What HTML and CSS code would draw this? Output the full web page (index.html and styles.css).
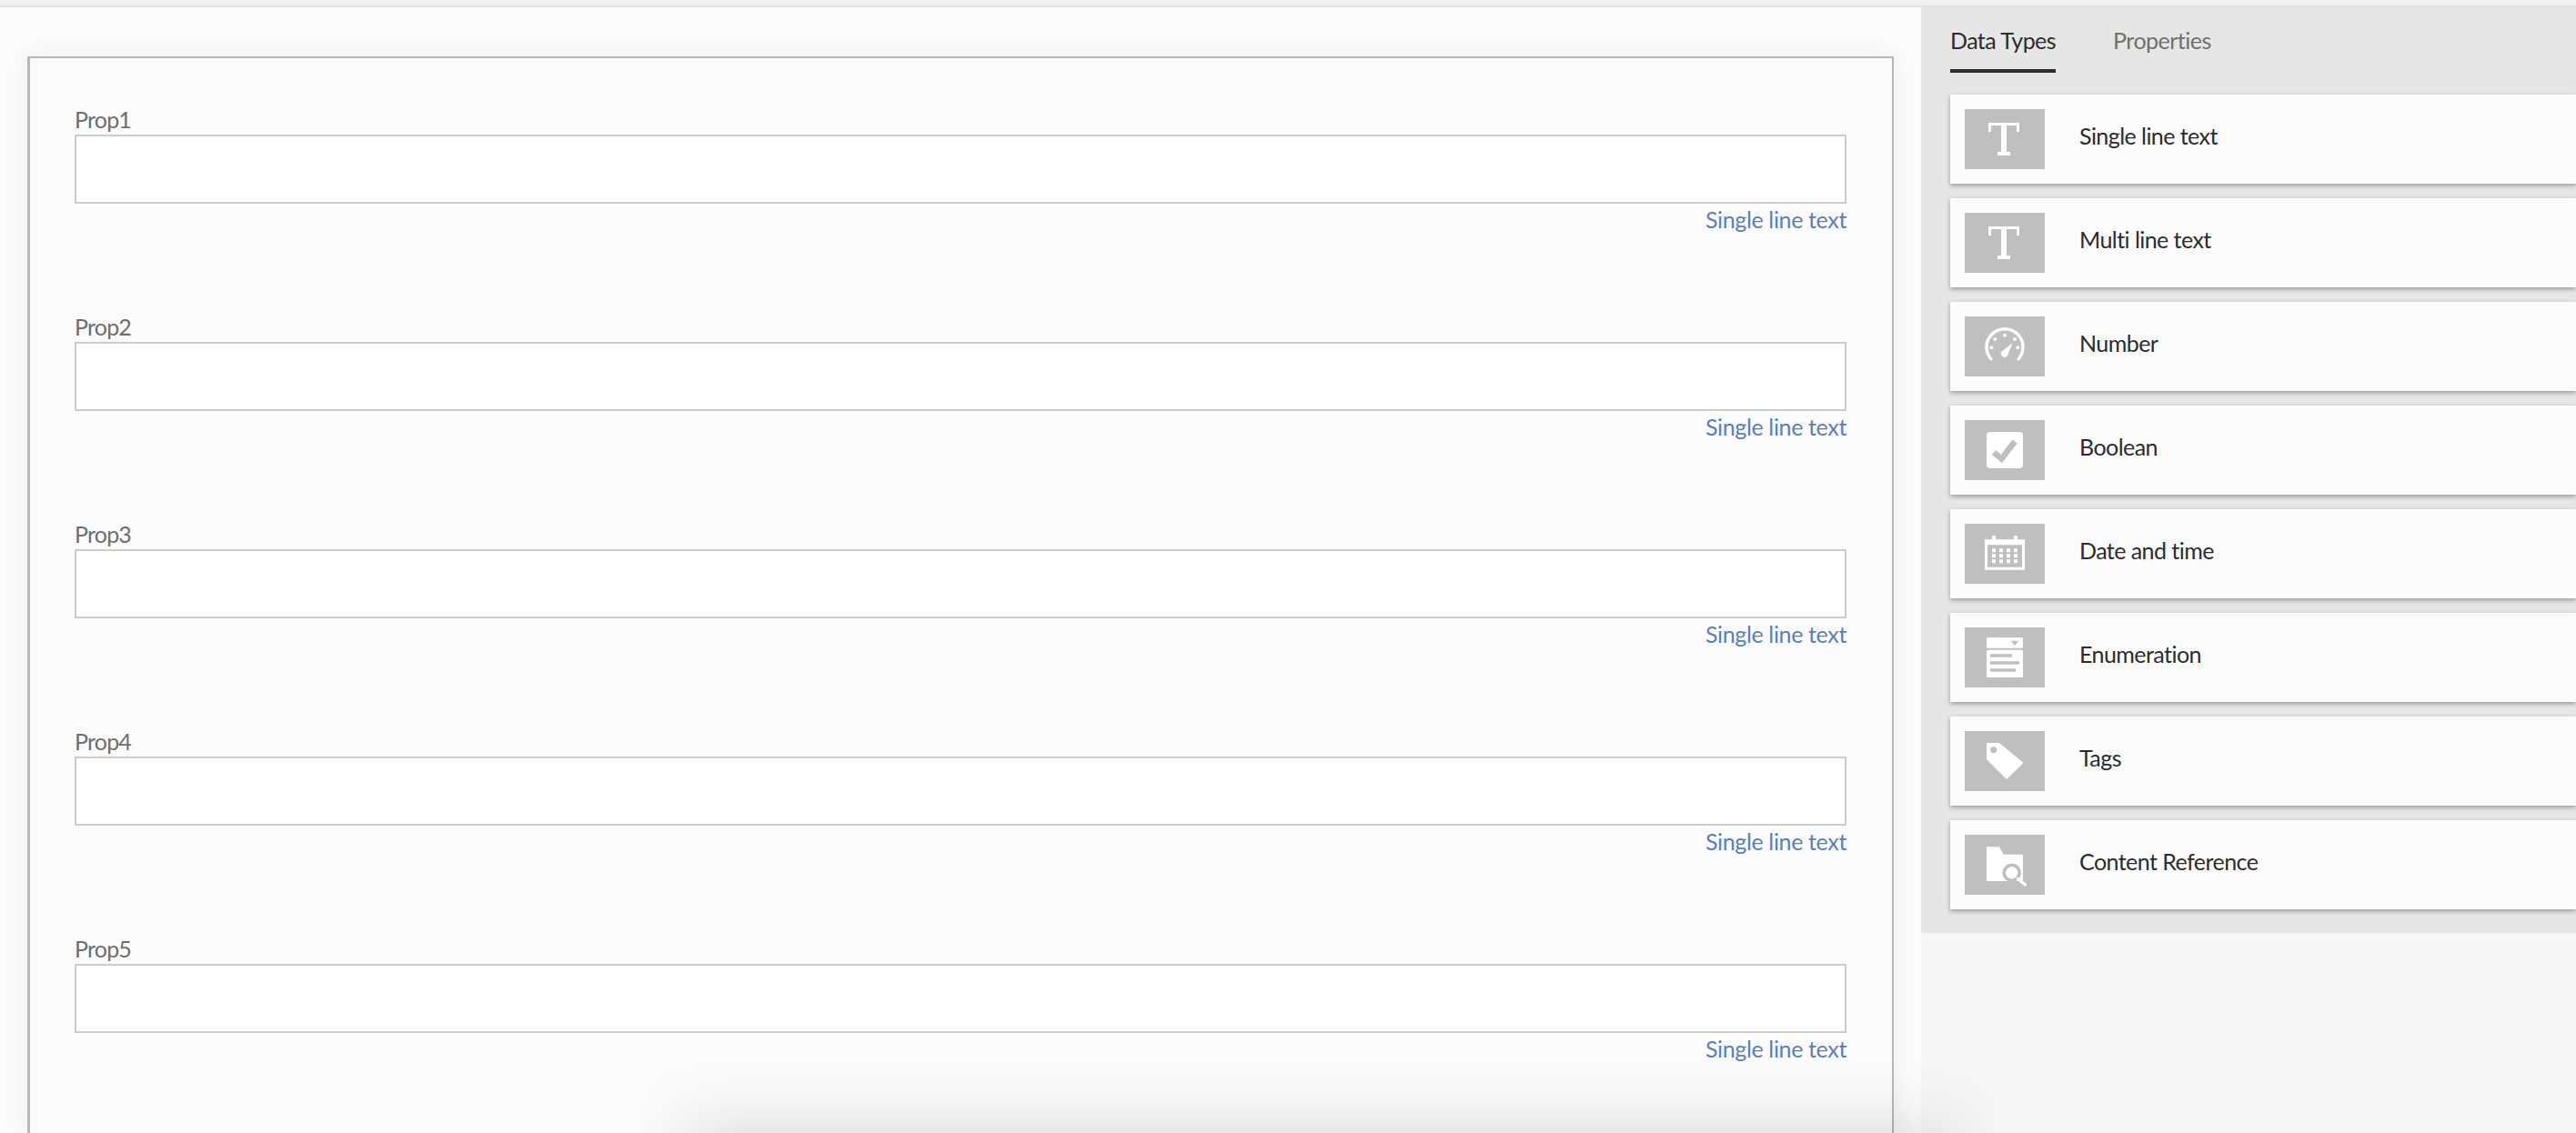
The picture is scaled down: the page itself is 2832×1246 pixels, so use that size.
FILE: index.html
```html
<!DOCTYPE html>
<html lang="en">
<head>
<meta charset="utf-8">
<title>Model editor</title>
<link rel="stylesheet" href="styles.css">
</head>
<body>
<div class="topbar"></div>
<div class="workspace">
  <main class="canvas">
    <section class="form-card">
      <div class="field"><label class="field-label">Prop1</label><div class="field-input"></div><div class="field-type">Single line text</div></div>
      <div class="field"><label class="field-label">Prop2</label><div class="field-input"></div><div class="field-type">Single line text</div></div>
      <div class="field"><label class="field-label">Prop3</label><div class="field-input"></div><div class="field-type">Single line text</div></div>
      <div class="field"><label class="field-label">Prop4</label><div class="field-input"></div><div class="field-type">Single line text</div></div>
      <div class="field"><label class="field-label">Prop5</label><div class="field-input"></div><div class="field-type">Single line text</div></div>
    </section>
  </main>
  <aside class="sidebar">
    <div class="panel">
      <nav class="tabs">
        <span class="tab tab-active">Data Types</span>
        <span class="tab">Properties</span>
      </nav>
      <ul class="types">
        <li class="type"><span class="tile"><svg class="icon" viewBox="0 0 40 40"><path d="M2 2H36V12H33V5H22V34H26V38H12V34H16V5H5V12H2Z" fill="#fff"/></svg></span><span class="type-name">Single line text</span></li>
        <li class="type"><span class="tile"><svg class="icon" viewBox="0 0 40 40"><path d="M2 2H36V12H33V5H22V34H26V38H12V34H16V5H5V12H2Z" fill="#fff"/></svg></span><span class="type-name">Multi line text</span></li>
        <li class="type"><span class="tile"><svg class="icon" viewBox="0 0 40 40"><path d="M5 34A20 20 0 1 1 35 34" fill="none" stroke="#fff" stroke-width="3.400" stroke-linecap="round"/><path d="M28.700 16.300L23 30a3.800 3.800 0 1 1-6.500-4.500z" fill="#fff"/><circle cx="5.300" cy="21.300" r="2" fill="#fff"/><circle cx="9.300" cy="12" r="2" fill="#fff"/><circle cx="20" cy="7.700" r="2" fill="#fff"/><circle cx="31" cy="12" r="2" fill="#fff"/><circle cx="34.300" cy="21.300" r="2" fill="#fff"/></svg></span><span class="type-name">Number</span></li>
        <li class="type"><span class="tile"><svg class="icon" viewBox="0 0 40 40"><rect width="40" height="40" rx="4" fill="#fff"/><path d="M8 22.500L16.500 29.500L31 10.500" fill="none" stroke="#bfbfbf" stroke-width="6.500"/></svg></span><span class="type-name">Boolean</span></li>
        <li class="type"><span class="tile"><svg class="icon" viewBox="0 0 40 40"><path fill="#fff" fill-rule="evenodd" d="M6 0.300H10V4.300H30V0.300H34V4.300H42V37.700H-2V4.300H6ZM1 10.300V34.700H39V10.300Z"/><path fill="#fff" d="M6 14.300h4v4h-4zM14 14.300h4v4h-4zM22 14.300h4v4h-4zM30 14.300h4v4h-4zM6 20.300h4v4h-4zM14 20.300h4v4h-4zM22 20.300h4v4h-4zM30 20.300h4v4h-4zM6 26.300h4v4h-4zM14 26.300h4v4h-4zM22 26.300h4v4h-4zM30 26.300h4v4h-4z"/></svg></span><span class="type-name">Date and time</span></li>
        <li class="type"><span class="tile"><svg class="icon" viewBox="0 0 40 40"><rect y="-2" width="40" height="11.700" rx="1.500" fill="#fff"/><path d="M26.700 1.700H35.300L31 7z" fill="#bfbfbf"/><rect y="11.700" width="40" height="30.300" rx="1.500" fill="#fff"/><path d="M4 16.300H28V19.700H4zM4 24.300H36V27.700H4zM4 32.300H32V35.700H4z" fill="#bfbfbf"/></svg></span><span class="type-name">Enumeration</span></li>
        <li class="type"><span class="tile"><svg class="icon" viewBox="0 0 40 40"><path d="M1 0H14L39.500 21Q40.500 22 39.500 23L23 39Q22 40 21 39L1 19Q0 18 0 17V1Q0 0 1 0Z" fill="#fff"/><circle cx="7.700" cy="7.700" r="3.500" fill="#bfbfbf"/></svg></span><span class="type-name">Tags</span></li>
        <li class="type"><span class="tile"><svg class="icon" viewBox="0 0 40 40"><path d="M0 1Q0 .300 1 .300H14L18.700 8.700H39Q40 8.700 40 9.700V37Q40 38 39 38H1Q0 38 0 37Z" fill="#fff"/><circle cx="27.700" cy="28.700" r="8.500" fill="#fff" stroke="#bfbfbf" stroke-width="3.600"/><path d="M34.500 35.500L42.500 42" stroke="#fff" stroke-width="3.400" stroke-linecap="round"/></svg></span><span class="type-name">Content Reference</span></li>
      </ul>
    </div>
  </aside>
</div>
<div class="overlay-shadow"></div>
</body>
</html>
```
FILE: styles.css
```css
* { box-sizing: border-box; }
body {
  margin: 0;
  height: 1246px;
  overflow: hidden;
  position: relative;
  background: #fbfbfb;
  font-family: Lato, "Liberation Sans", sans-serif;
}
.topbar { height: 8px; background: #f0f0f0; border-bottom: 2px solid #e1e1e1; }
.workspace { display: grid; grid-template-columns: 2112px 720px; height: 1238px; }
.canvas { padding: 54px 30px 0; overflow: hidden; height: 1238px; }
.form-card {
  height: 1184px;
  width: 2052px;
  border: 2px solid #b8b8b8;
  border-left-width: 3px;
  border-bottom: 0;
  background: #fbfbfb;
  box-shadow: 0 0 24px rgba(0,0,0,.05);
  padding: 48px 50px 0 49px;
  display: flex;
  flex-direction: column;
  gap: 82px;
}
.field { display: flex; flex-direction: column; flex: none; height: 146px; }
.field-label { font-size: 25px; line-height: 39px; height: 36px; color: #6e6e6e; letter-spacing: -0.8px; }
.field-input { height: 76px; flex: none; background: #fff; border: 2px solid #ccc; }
.field-type { margin-top: 1px; text-align: right; font-size: 25px; line-height: 32px; color: #5a7fbd; letter-spacing: -0.35px; }
.sidebar { background: #f6f6f6; height: 1238px; }
.panel { background: #e6e6e6; height: 1018px; padding: 0 0 0 32px; }
.tabs { display: flex; gap: 63px; height: 96px; }
.tab { height: 72px; font-size: 25px; line-height: 72px; color: #707070; letter-spacing: -0.5px; }
.tab-active { color: #2c2c2c; border-bottom: 4px solid #2c2c2c; letter-spacing: -0.55px; }
.types { list-style: none; margin: 0; padding: 0; display: flex; flex-direction: column; gap: 16px; }
.type {
  height: 98px;
  background: #fbfbfb;
  box-shadow: 0 2px 5px rgba(0,0,0,.35);
  display: flex;
  align-items: center;
  padding-left: 16px;
}
.tile { width: 88px; height: 66px; background: #bfbfbf; display: flex; align-items: center; justify-content: center; flex: none; }
.icon { width: 40px; height: 40px; overflow: visible; }
.type-name { margin-left: 38px; margin-top: -8px; font-size: 25px; line-height: 34px; color: #2c2c2c; letter-spacing: -0.55px; }
.overlay-shadow {
  position: absolute;
  left: 700px;
  bottom: 0;
  width: 1500px;
  height: 80px;
  background: linear-gradient(to bottom, rgba(0,0,0,0), rgba(0,0,0,.012) 35%, rgba(0,0,0,.035) 65%, rgba(0,0,0,.08));
  -webkit-mask-image: linear-gradient(to right, transparent, #000 120px, #000 calc(100% - 120px), transparent);
  mask-image: linear-gradient(to right, transparent, #000 120px, #000 calc(100% - 120px), transparent);
}
```
